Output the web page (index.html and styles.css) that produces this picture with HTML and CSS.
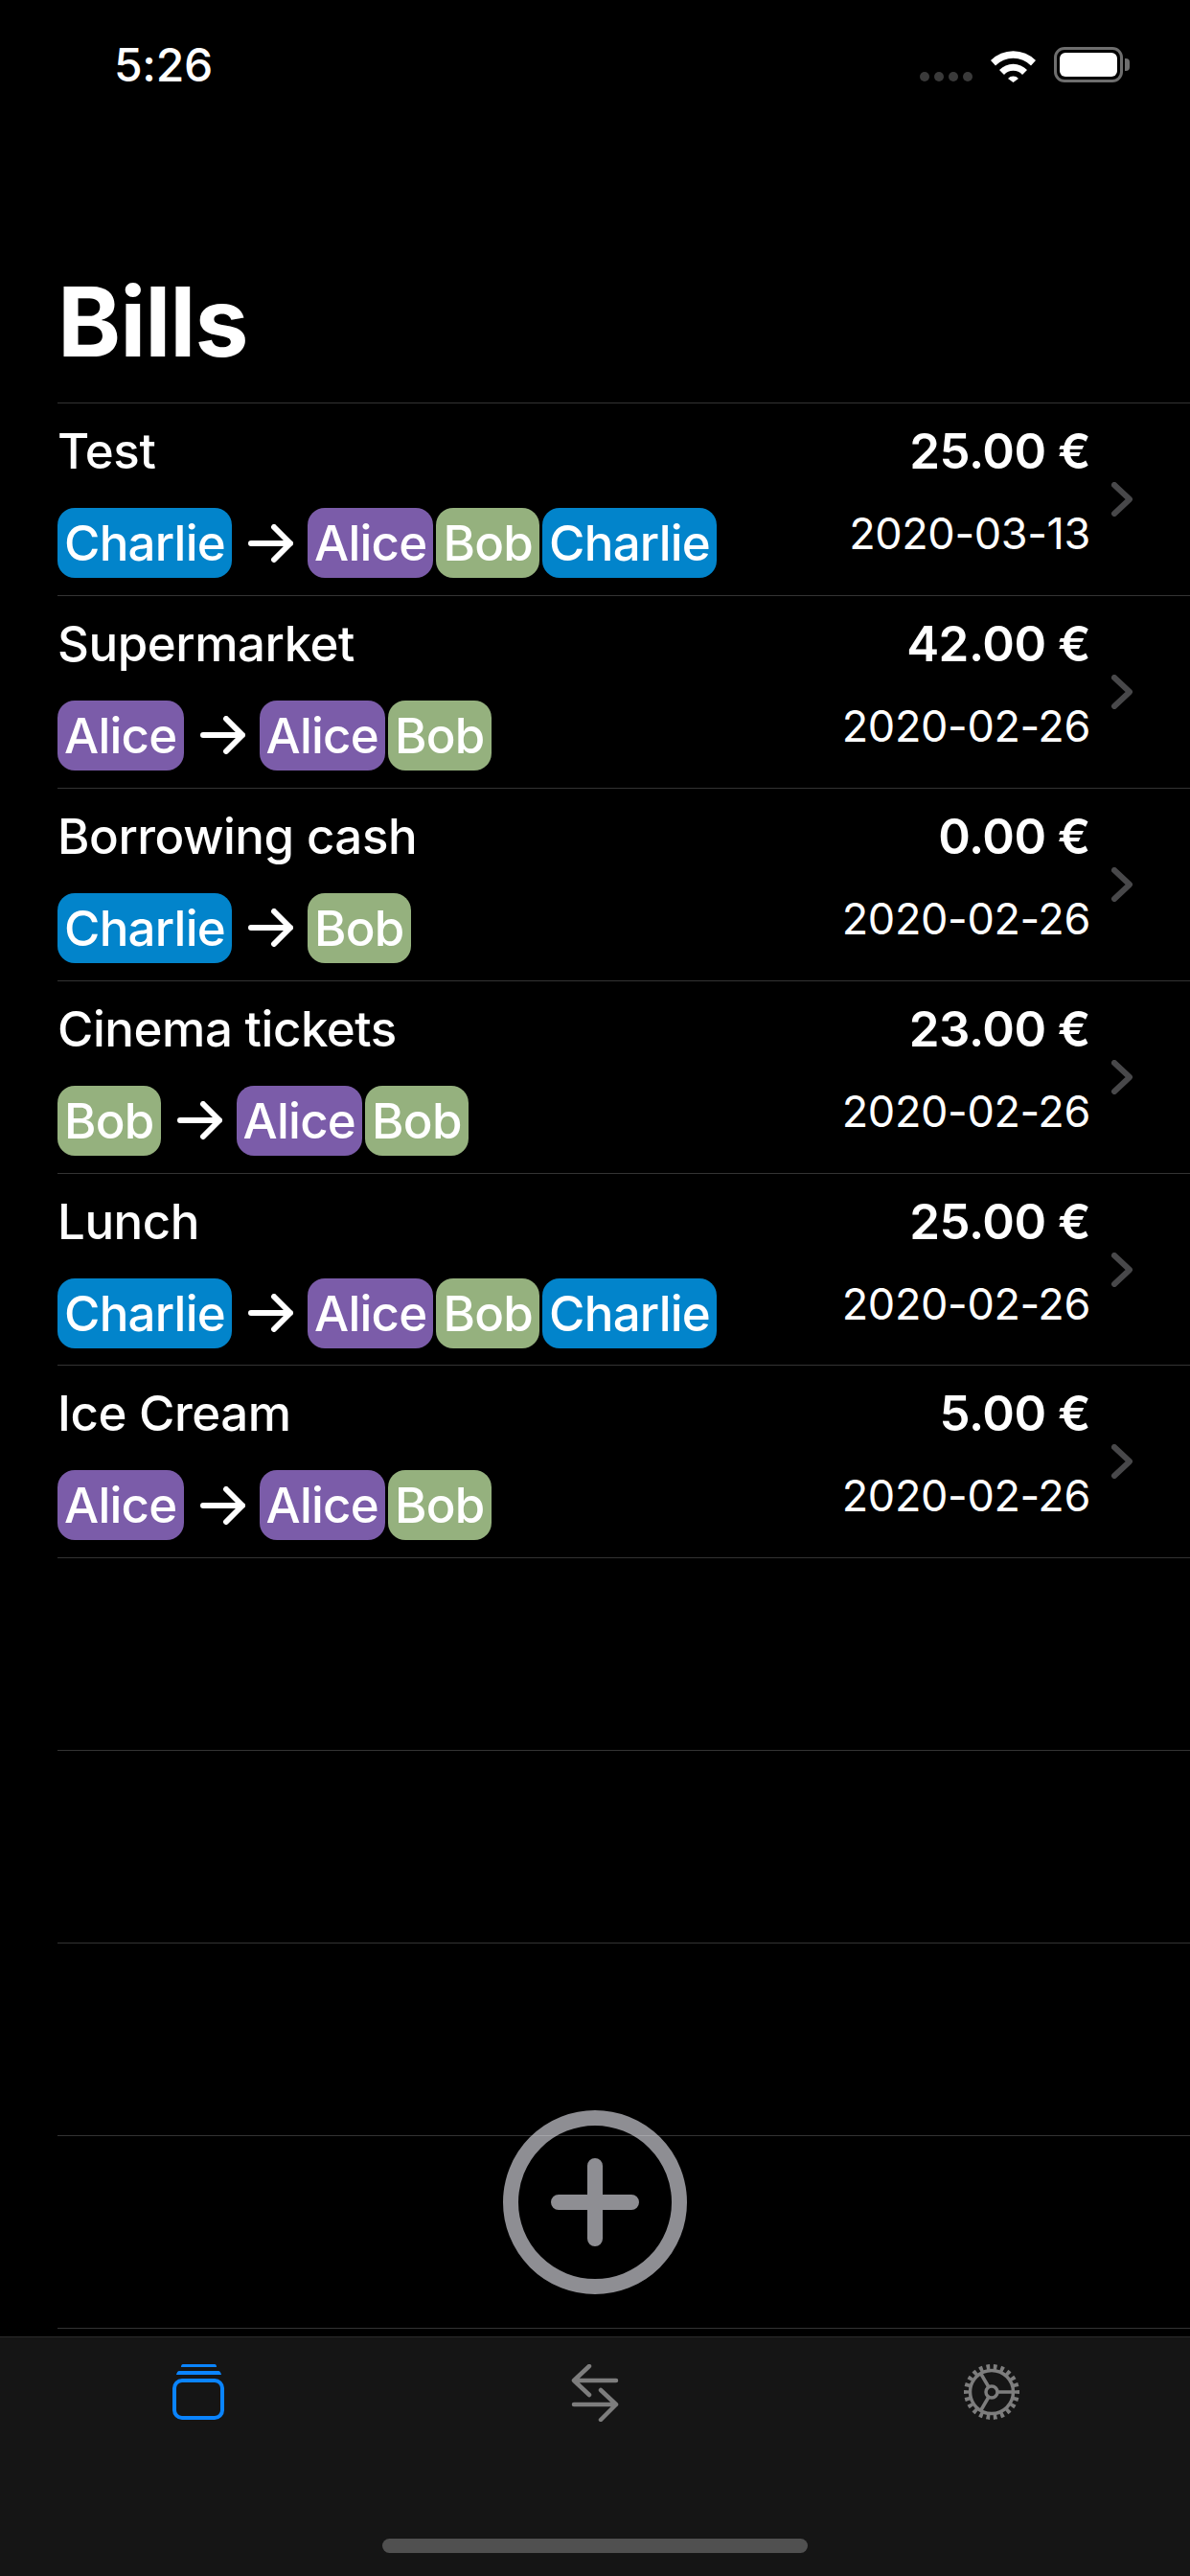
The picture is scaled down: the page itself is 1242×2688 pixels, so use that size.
FILE: index.html
```html
<!DOCTYPE html>
<html lang="en">
  <head>
    <meta charset="UTF-8" />
    <meta name="viewport" content="width=device-width, initial-scale=1.0" />
    <title>Bills</title>
    <link rel="stylesheet" href="styles.css">
  </head>
  <body>
    <div class="status">
      <span class="time">5:26</span>
      <div class="status-icons">
        <div class="signal"><i></i><i></i><i></i><i></i></div>
        <svg class="wifi" width="47" height="36" viewBox="0 0 47 36">
          <path d="M0 13 A33 33 0 0 1 47 13 L42 18.500 A26 26 0 0 0 5 18.500 Z" fill="#fff" />
          <path d="M9 23 A20 20 0 0 1 38 23 L33 28 A13 13 0 0 0 14 28 Z" fill="#fff" />
          <path d="M18 32 A7.500 7.500 0 0 1 29 32 L23.500 36 Z" fill="#fff" />
        </svg>
        <div class="battery"><div class="battery-fill"></div></div>
      </div>
    </div>

    <h1 class="title">Bills</h1>

    <div class="list">
      <div class="row">
        <div class="row-main">
          <div class="row-name">Test</div>
          <div class="chips">
            <span class="chip charlie">Charlie</span>
            <svg class="arrow" width="47" height="40" viewBox="0 0 47 40"><path d="M3 20 H44 M27 3 L44 20 L27 37" /></svg>
            <span class="chip alice">Alice</span><span class="chip bob">Bob</span><span class="chip charlie">Charlie</span>
          </div>
        </div>
        <div class="row-side">
          <div class="amount">25.00 €</div>
          <div class="date">2020-03-13</div>
        </div>
        <svg class="chevron" width="22" height="36" viewBox="0 0 22 36"><path d="M3 3 L19 18 L3 33" /></svg>
      </div>

      <div class="row">
        <div class="row-main">
          <div class="row-name">Supermarket</div>
          <div class="chips">
            <span class="chip alice">Alice</span>
            <svg class="arrow" width="47" height="40" viewBox="0 0 47 40"><path d="M3 20 H44 M27 3 L44 20 L27 37" /></svg>
            <span class="chip alice">Alice</span><span class="chip bob">Bob</span>
          </div>
        </div>
        <div class="row-side">
          <div class="amount">42.00 €</div>
          <div class="date">2020-02-26</div>
        </div>
        <svg class="chevron" width="22" height="36" viewBox="0 0 22 36"><path d="M3 3 L19 18 L3 33" /></svg>
      </div>

      <div class="row">
        <div class="row-main">
          <div class="row-name">Borrowing cash</div>
          <div class="chips">
            <span class="chip charlie">Charlie</span>
            <svg class="arrow" width="47" height="40" viewBox="0 0 47 40"><path d="M3 20 H44 M27 3 L44 20 L27 37" /></svg>
            <span class="chip bob">Bob</span>
          </div>
        </div>
        <div class="row-side">
          <div class="amount">0.00 €</div>
          <div class="date">2020-02-26</div>
        </div>
        <svg class="chevron" width="22" height="36" viewBox="0 0 22 36"><path d="M3 3 L19 18 L3 33" /></svg>
      </div>

      <div class="row">
        <div class="row-main">
          <div class="row-name">Cinema tickets</div>
          <div class="chips">
            <span class="chip bob">Bob</span>
            <svg class="arrow" width="47" height="40" viewBox="0 0 47 40"><path d="M3 20 H44 M27 3 L44 20 L27 37" /></svg>
            <span class="chip alice">Alice</span><span class="chip bob">Bob</span>
          </div>
        </div>
        <div class="row-side">
          <div class="amount">23.00 €</div>
          <div class="date">2020-02-26</div>
        </div>
        <svg class="chevron" width="22" height="36" viewBox="0 0 22 36"><path d="M3 3 L19 18 L3 33" /></svg>
      </div>

      <div class="row">
        <div class="row-main">
          <div class="row-name">Lunch</div>
          <div class="chips">
            <span class="chip charlie">Charlie</span>
            <svg class="arrow" width="47" height="40" viewBox="0 0 47 40"><path d="M3 20 H44 M27 3 L44 20 L27 37" /></svg>
            <span class="chip alice">Alice</span><span class="chip bob">Bob</span><span class="chip charlie">Charlie</span>
          </div>
        </div>
        <div class="row-side">
          <div class="amount">25.00 €</div>
          <div class="date">2020-02-26</div>
        </div>
        <svg class="chevron" width="22" height="36" viewBox="0 0 22 36"><path d="M3 3 L19 18 L3 33" /></svg>
      </div>

      <div class="row">
        <div class="row-main">
          <div class="row-name">Ice Cream</div>
          <div class="chips">
            <span class="chip alice">Alice</span>
            <svg class="arrow" width="47" height="40" viewBox="0 0 47 40"><path d="M3 20 H44 M27 3 L44 20 L27 37" /></svg>
            <span class="chip alice">Alice</span><span class="chip bob">Bob</span>
          </div>
        </div>
        <div class="row-side">
          <div class="amount">5.00 €</div>
          <div class="date">2020-02-26</div>
        </div>
        <svg class="chevron" width="22" height="36" viewBox="0 0 22 36"><path d="M3 3 L19 18 L3 33" /></svg>
      </div>

      <div class="row"></div>
      <div class="row"></div>
      <div class="row"></div>
      <div class="row"></div>
      <div class="row last"></div>
    </div>

    <svg class="add" width="192" height="192" viewBox="0 0 192 192">
      <circle cx="96" cy="96" r="88" />
      <path d="M96 58 V134 M58 96 H134" />
    </svg>

    <div class="tabs">
      <div class="tab">
        <svg class="tab-bills" width="54" height="58" viewBox="0 0 54 58">
          <path class="bars" d="M11 0 H44 Q46 0 46 3 H9 Q9 0 11 0 Z M7 7 H48 Q50 7 51 11 H4 Q5 7 7 7 Z" />
          <rect x="2" y="17" width="50" height="39" rx="8" />
        </svg>
      </div>
      <div class="tab">
        <svg class="tab-icon" width="50" height="60" viewBox="0 0 50 60">
          <path d="M47 17 H3 M19 2 L3 17 L19 32 M3 42 H47 M31 27 L47 42 L31 58" />
        </svg>
      </div>
      <div class="tab">
        <svg class="tab-gear" width="58" height="58" viewBox="0 0 58 58">
          <circle class="gear-teeth" cx="29" cy="29" r="26" pathLength="44" />
          <circle cx="29" cy="29" r="22.500" />
          <circle cx="29" cy="29" r="6" />
          <path d="M35 29 H52 M26 24 L17.500 9.500 M26 34 L17.500 48.500" />
        </svg>
      </div>
    </div>
    <div class="home-bar"></div>
  </body>
</html>
```

FILE: styles.css
```css
body {
  background-color: #000000;
  color: #ffffff;
  display: flex;
  flex-direction: column;
  width: 1242px;
  height: 2688px;
  margin: 0;
  overflow: hidden;
  position: relative;
  font-family: Inter, "Noto Sans", sans-serif;
}

.status {
  display: flex;
  flex: none;
  justify-content: space-between;
  align-items: flex-start;
  height: 132px;
  padding: 40px 70px 0 119px;
  box-sizing: border-box;
}

.time {
  font-size: 48px;
  font-weight: 500;
  line-height: 56px;
  letter-spacing: -0.300px;
}

.status-icons {
  display: flex;
  align-items: flex-end;
  margin-top: 9px;
}

.signal {
  display: flex;
  gap: 5px;
  margin-right: 19px;
  margin-bottom: 1px;
}

.signal i {
  width: 10px;
  height: 10px;
  border-radius: 5px;
  background: #3a3a3a;
}

.wifi {
  margin-right: 19px;
}

.battery {
  width: 72px;
  height: 37px;
  box-sizing: border-box;
  border: 3px solid #6e6e6e;
  border-radius: 11px;
  padding: 3px;
  position: relative;
}

.battery::after {
  content: "";
  position: absolute;
  right: -10px;
  top: 9px;
  width: 5px;
  height: 13px;
  background: #6e6e6e;
  border-radius: 0 4px 4px 0;
}

.battery-fill {
  height: 100%;
  background: #ffffff;
  border-radius: 6px;
}

.title {
  flex: none;
  margin: 0;
  height: 288px;
  padding: 142px 0 0 60px;
  box-sizing: border-box;
  font-size: 100px;
  font-weight: 700;
  line-height: 124px;
  letter-spacing: -1px;
}

.list {
  flex: none;
  margin-left: 60px;
  position: relative;
  z-index: 1;
}

.row {
  display: flex;
  align-items: center;
  height: 200.900px;
  box-sizing: border-box;
  border-top: 1px solid rgba(255, 255, 255, 0.2);
  padding-right: 60px;
}

.row.last {
  height: 9px;
}

.row-main {
  flex: 1;
  align-self: flex-start;
  padding-top: 20px;
}

.row-name {
  font-size: 51px;
  font-weight: 500;
  line-height: 60px;
  letter-spacing: -0.450px;
}

.chips {
  display: flex;
  align-items: center;
  margin-top: 29px;
}

.chip {
  height: 73px;
  line-height: 73px;
  padding: 0 7px;
  margin-right: 3px;
  border-radius: 18px;
  font-size: 51px;
  font-weight: 500;
  letter-spacing: -0.750px;
}

.charlie {
  background: #0284cb;
}

.alice {
  background: #7b5ca9;
}

.bob {
  background: #95b17e;
}

.arrow {
  margin: 0 15px 0 14px;
}

.arrow path {
  fill: none;
  stroke: #ffffff;
  stroke-width: 6;
  stroke-linecap: round;
  stroke-linejoin: round;
}

.row-side {
  align-self: flex-start;
  padding-top: 20px;
  text-align: right;
  margin-right: 22px;
}

.amount {
  font-size: 51px;
  font-weight: 600;
  line-height: 60px;
  letter-spacing: -0.500px;
}

.date {
  font-size: 45px;
  font-weight: 400;
  line-height: 56px;
  margin-top: 28px;
  letter-spacing: -0.350px;
}

.chevron path {
  fill: none;
  stroke: #48484a;
  stroke-width: 6;
  stroke-linecap: round;
  stroke-linejoin: round;
}

.add {
  position: absolute;
  left: 525px;
  top: 2202px;
}

.add circle {
  fill: none;
  stroke: #8e8e93;
  stroke-width: 16;
}

.add path {
  fill: none;
  stroke: #8e8e93;
  stroke-width: 16;
  stroke-linecap: round;
}

.tabs {
  display: flex;
  flex: 1;
  align-items: flex-start;
  background: #151515;
  border-top: 1px solid #2c2c2c;
  padding-top: 28px;
  box-sizing: border-box;
}

.tab {
  flex: 1;
  display: flex;
  justify-content: center;
}

.tab-bills .bars {
  fill: #0a84ff;
}

.tab-bills rect {
  fill: none;
  stroke: #0a84ff;
  stroke-width: 4;
}

.tab-icon path {
  fill: none;
  stroke: #7d7d7d;
  stroke-width: 4.500;
  stroke-linecap: round;
  stroke-linejoin: round;
}

.tab-gear circle,
.tab-gear path {
  fill: none;
  stroke: #7d7d7d;
  stroke-width: 3.500;
}

.tab-gear .gear-teeth {
  stroke-width: 6;
  stroke-dasharray: 1 1;
  stroke-dashoffset: 0.500;
}

.home-bar {
  position: absolute;
  left: 399px;
  top: 2649px;
  width: 444px;
  height: 15px;
  border-radius: 8px;
  background: #505050;
}
```
